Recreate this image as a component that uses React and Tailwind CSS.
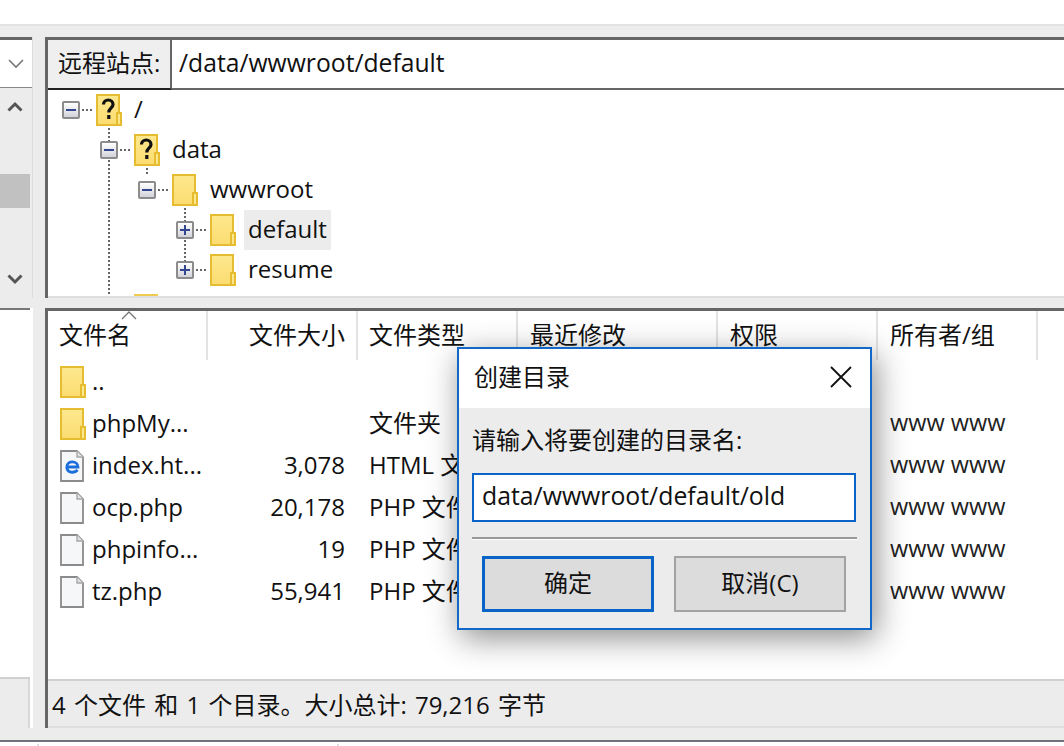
const FONT = "font-['Open_Sans','Noto_Sans_CJK_SC',sans-serif]";

function Folder({ q, border = "#e6bd30" }) {
  return (
    <svg width="26" height="32" viewBox="0 0 26 32" className="shrink-0 block">
      <defs>
        <linearGradient id="fg" x1="0" y1="0" x2="0" y2="1">
          <stop offset="0" stopColor="#fde88e" />
          <stop offset="1" stopColor="#fbdc70" />
        </linearGradient>
      </defs>
      <path d="M1 1H23V31H1Z" fill="url(#fg)" stroke={border} strokeWidth="2" />
      <path d="M21 19H25V31H21Z" fill="#fce68c" stroke={border} strokeWidth="2" />
      {q && (
        <path d="M7.5 10.5C7.5 4.5 17 4.5 17 10.5C17 14 12.8 14 12.8 18.5M12.8 21V25" fill="none" stroke="#111" strokeWidth="3.2" />
      )}
    </svg>
  );
}

function FileIcon({ e }) {
  return (
    <svg width="24" height="32" viewBox="0 0 24 32" className="shrink-0 block mr-[2px]">
      <path d="M1 1H17L23 7V31H1Z" fill="#f5f7f9" stroke="#8b8b8b" strokeWidth="1.8" />
      <path d="M17 1V7H23" fill="#dfe1e3" stroke="#a8a8a8" strokeWidth="1.4" />
      {e && (
        <path d="M8 17H18C18 10.5 7 10 6.8 17C6.7 23 14.5 23.5 17.6 20" fill="none" stroke="#1a6fdc" strokeWidth="2.8" />
      )}
    </svg>
  );
}

function Expander({ plus }) {
  return (
    <span className="relative block w-[18px] h-[18px] shrink-0 rounded-[2px] border-2 border-[#8c8c8c] bg-gradient-to-b from-white to-[#d2d3da]">
      <span className="absolute left-[2px] right-[2px] top-[6px] h-[2px] bg-[#34468f]" />
      {plus && <span className="absolute top-[2px] bottom-[2px] left-[6px] w-[2px] bg-[#34468f]" />}
    </span>
  );
}

function TreeRow({ level, plus, q, label, selected }) {
  return (
    <div className="relative h-10 flex items-center" style={{ paddingLeft: 14 + level * 38 }}>
      <Expander plus={plus} />
      <span className="w-[11px] ml-[2px] mr-[3px] h-[2px] bg-[repeating-linear-gradient(to_right,#666_0,#666_2px,transparent_2px,transparent_4px)]" />
      <Folder q={q} />
      <span className={`ml-[8px] px-1 pb-[2px] h-10 flex items-center text-[#111] ${selected ? "bg-[#ececec]" : ""}`}>{label}</span>
    </div>
  );
}

const COLS = ["w-[160px]", "w-[150px]", "w-[160px]", "w-[200px]", "w-[160px]", "w-[160px]"];

function HeaderCell({ w, children, right, first, pl11 }) {
  return (
    <div className={`${w} h-[49px] pb-[2px] shrink-0 border-r-2 border-[#e3e3e3] flex items-center ${right ? "justify-end pr-[11px]" : first || pl11 ? "pl-[11px]" : "pl-[12px]"}`}>
      {children}
    </div>
  );
}

function FileRow({ icon, name, size, type }) {
  return (
    <div className="h-[42px] flex items-center">
      <div className={`${COLS[0]} shrink-0 flex items-center pl-[12px] gap-[6px]`}>
        {icon}
        <span className="text-[#111] pb-[3px]">{name}</span>
      </div>
      <div className={`${COLS[1]} shrink-0 text-right pr-[13px] pb-[3px]`}>{size}</div>
      <div className={`${COLS[2]} shrink-0 pl-[11px] pb-[3px]`}>{type}</div>
      <div className={COLS[3]} />
      <div className={COLS[4]} />
      {name !== ".." ? <div className={`${COLS[5]} pl-[12px] text-[23.5px] text-[#222] pb-[2px]`}>www www</div> : null}
    </div>
  );
}

const DOT_V = "w-[2px] bg-[repeating-linear-gradient(to_bottom,#666_0,#666_2px,transparent_2px,transparent_4px)]";

export default function App() {
  return (
    <div className={`${FONT} relative w-[1064px] h-[746px] overflow-hidden bg-[#ececec] text-[24px] leading-none text-[#111] flex flex-col`}>
      <div className="h-[24px] bg-white shrink-0" />
      <div className="h-[2px] bg-[#e2e2e2] shrink-0" />
      <div className="h-[11px] shrink-0" />

      <div className="flex h-[261px] shrink-0">
        <div className="w-[33px] shrink-0 flex flex-col border-r-[1px] border-[#dcdcdc]">
          <div className="h-[3px] bg-[#666] shrink-0" />
          <div className="h-[48px] bg-white flex items-center justify-end pr-[8px] shrink-0 border-b border-[#888]">
            <svg width="16" height="10" viewBox="0 0 16 10"><path d="M1 1L8 8L15 1" fill="none" stroke="#777" strokeWidth="1.6" /></svg>
          </div>
          <div className="flex-1 flex flex-col justify-between items-end pr-[2px] relative">
            <svg className="mt-[13px] mr-[7px]" width="16" height="11" viewBox="0 0 16 11"><path d="M1.5 9.5L8 3L14.5 9.5" fill="none" stroke="#555" strokeWidth="3" /></svg>
            <div className="absolute left-0 right-[2px] top-[86px] h-[34px] bg-[#c1c1c1]" />
            <svg className="mb-[13px] mr-[7px]" width="16" height="11" viewBox="0 0 16 11"><path d="M1.5 1.5L8 8L14.5 1.5" fill="none" stroke="#555" strokeWidth="3" /></svg>
          </div>
        </div>
        <div className="w-[12px] shrink-0" />
        <div className="flex-1 flex flex-col border-l-[3px] border-t-[3px] border-[#666] bg-white">
          <div className="flex h-[50px] shrink-0">
            <div className="w-[124px] shrink-0 bg-[#efefef] border-b-2 border-r-2 border-[#222] border-r-[#666] flex items-center pl-[10px] pb-[3px]">远程站点:</div>
            <div className="flex-1 border-b-2 border-[#666] flex items-center pl-[7px] pb-[1px] text-[24.7px]">/data/wwwroot/default</div>
          </div>
          <div className="relative flex-1 overflow-hidden border-b-[2px] border-[#dedede]">
            <div className={`absolute left-[60px] top-[38px] bottom-0 ${DOT_V}`} />
            <div className={`absolute left-[98px] top-[78px] h-[8px] ${DOT_V}`} />
            <div className={`absolute left-[136px] top-[118px] h-[54px] ${DOT_V}`} />
            <TreeRow level={0} q label="/" />
            <TreeRow level={1} q label="data" />
            <TreeRow level={2} label="wwwroot" />
            <TreeRow level={3} plus label="default" selected />
            <TreeRow level={3} plus label="resume" />
            <div className="absolute left-[86px] top-[204px] w-[24px] h-[3px] bg-[#f0cb4f]" />
          </div>
        </div>
      </div>

      <div className="h-[10px] shrink-0" />

      <div className="flex h-[420px] shrink-0">
        <div className="w-[33px] shrink-0 flex flex-col border-r-[3px] border-white">
          <div className="h-[2px] bg-[#777] shrink-0" />
          <div className="h-[367px] bg-white shrink-0" />
          <div className="h-[2px] bg-[#d0d0d0] shrink-0" />
          <div className="flex-1 border-r-2 border-[#d8d8d8]" />
        </div>
        <div className="w-[12px] shrink-0" />
        <div className="flex-1 flex flex-col border-l-[3px] border-t-[3px] border-[#666] bg-white">
          <div className="relative flex h-[49px] shrink-0">
            <HeaderCell w={COLS[0]} first>文件名</HeaderCell>
            <HeaderCell w={COLS[1]} right>文件大小</HeaderCell>
            <HeaderCell w={COLS[2]} pl11>文件类型</HeaderCell>
            <HeaderCell w={COLS[3]}>最近修改</HeaderCell>
            <HeaderCell w={COLS[4]}>权限</HeaderCell>
            <HeaderCell w={COLS[5]}>所有者/组</HeaderCell>
            <svg className="absolute left-[73px] top-[0px]" width="16" height="9" viewBox="0 0 16 9"><path d="M1 8L8 1L15 8" fill="none" stroke="#777" strokeWidth="1.4" /></svg>
          </div>
          <div className="h-[319px] pt-[1px] shrink-0 overflow-hidden">
            <FileRow icon={<Folder />} name=".." />
            <FileRow icon={<Folder />} name="phpMy..." type="文件夹" />
            <FileRow icon={<FileIcon e />} name="index.ht..." size="3,078" type="HTML 文件" />
            <FileRow icon={<FileIcon />} name="ocp.php" size="20,178" type="PHP 文件" />
            <FileRow icon={<FileIcon />} name="phpinfo..." size="19" type="PHP 文件" />
            <FileRow icon={<FileIcon />} name="tz.php" size="55,941" type="PHP 文件" />
          </div>
          <div className="h-[2px] bg-[#d0d0d0] shrink-0" />
          <div className="flex-1 bg-[#ececec] flex items-center pl-[4px] pt-[2px] border-b-2 border-[#dedede] [word-spacing:2px]">4 个文件 和 1 个目录。大小总计: 79,216 字节</div>
        </div>
      </div>

      <div className="h-[12px] shrink-0" />
      <div className="h-[2px] bg-[#6e7179] shrink-0" />
      <div className="flex-1 bg-white pt-[2px] pl-[37px] flex gap-[298px] items-start">
        <span className="w-[2px] h-[2px] bg-[#dcdcdc]" />
        <span className="w-[2px] h-[2px] bg-[#dcdcdc]" />
      </div>

      <div className="absolute left-[457px] top-[347px] w-[415px] h-[283px] border-2 border-[#1168c9] bg-[#ececec] shadow-[4px_8px_30px_rgba(0,0,0,0.45)] flex flex-col">
        <div className="h-[59px] bg-white flex items-center justify-between pl-[15px] pr-[18px] pb-[3px] shrink-0">
          <span>创建目录</span>
          <svg width="22" height="22" viewBox="0 0 22 22"><path d="M1 1L21 21M21 1L1 21" fill="none" stroke="#111" strokeWidth="1.8" /></svg>
        </div>
        <div className="flex-1 flex flex-col px-[13px]">
          <div className="mt-[19px] h-[25px] flex items-center">请输入将要创建的目录名:</div>
          <div className="mt-[21px] mr-[1px] h-[49px] border-2 border-[#0a64c8] bg-white flex items-center pl-[8px] pb-[5px] text-[24.8px]">data/wwwroot/default/old</div>
          <div className="mt-[15px] h-[3px] border-t-2 border-[#999] border-b border-b-white" />
          <div className="mt-[16px] flex gap-[20px] pl-[10px]">
            <button className="w-[172px] h-[56px] border-[3px] border-[#0a64c8] bg-[#dcdcdc] flex items-center justify-center pb-[2px]">确定</button>
            <button className="w-[172px] h-[56px] border-2 border-[#a3a3a3] bg-[#dcdcdc] flex items-center justify-center pb-[2px]">取消(C)</button>
          </div>
        </div>
      </div>
    </div>
  );
}
